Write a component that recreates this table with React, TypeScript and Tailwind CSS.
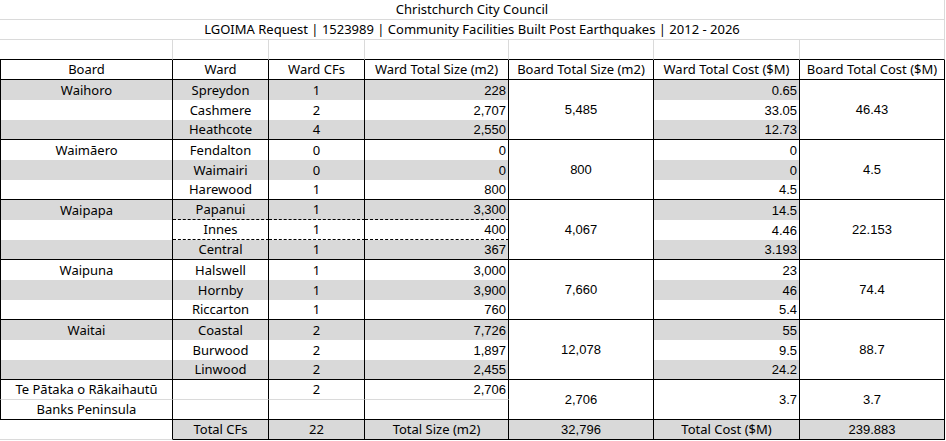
import { Fragment } from "react";

type WardRow = { ward: string; cfs: string; size: string; cost: string };
type Group = {
  board: string;
  boardSize: string;
  boardCost: string;
  dashed?: boolean;
  rows: WardRow[];
};

const groups: Group[] = [
  {
    board: "Waihoro",
    boardSize: "5,485",
    boardCost: "46.43",
    rows: [
      { ward: "Spreydon", cfs: "1", size: "228", cost: "0.65" },
      { ward: "Cashmere", cfs: "2", size: "2,707", cost: "33.05" },
      { ward: "Heathcote", cfs: "4", size: "2,550", cost: "12.73" },
    ],
  },
  {
    board: "Waimāero",
    boardSize: "800",
    boardCost: "4.5",
    rows: [
      { ward: "Fendalton", cfs: "0", size: "0", cost: "0" },
      { ward: "Waimairi", cfs: "0", size: "0", cost: "0" },
      { ward: "Harewood", cfs: "1", size: "800", cost: "4.5" },
    ],
  },
  {
    board: "Waipapa",
    boardSize: "4,067",
    boardCost: "22.153",
    dashed: true,
    rows: [
      { ward: "Papanui", cfs: "1", size: "3,300", cost: "14.5" },
      { ward: "Innes", cfs: "1", size: "400", cost: "4.46" },
      { ward: "Central", cfs: "1", size: "367", cost: "3.193" },
    ],
  },
  {
    board: "Waipuna",
    boardSize: "7,660",
    boardCost: "74.4",
    rows: [
      { ward: "Halswell", cfs: "1", size: "3,000", cost: "23" },
      { ward: "Hornby", cfs: "1", size: "3,900", cost: "46" },
      { ward: "Riccarton", cfs: "1", size: "760", cost: "5.4" },
    ],
  },
  {
    board: "Waitai",
    boardSize: "12,078",
    boardCost: "88.7",
    rows: [
      { ward: "Coastal", cfs: "2", size: "7,726", cost: "55" },
      { ward: "Burwood", cfs: "2", size: "1,897", cost: "9.5" },
      { ward: "Linwood", cfs: "2", size: "2,455", cost: "24.2" },
    ],
  },
];

const headers = [
  "Board",
  "Ward",
  "Ward CFs",
  "Ward Total Size (m2)",
  "Board Total Size (m2)",
  "Ward Total Cost ($M)",
  "Board Total Cost ($M)",
];

// Aptos-ish for labels, Arial metrics for the numeric cells
const txt = "font-['Noto_Sans',sans-serif] text-[13px]";
const num = "font-['Liberation_Sans',Arial,sans-serif] text-[13px]";

function Cell({ children, className = "" }: { children?: React.ReactNode; className?: string }) {
  return (
    <div className={`flex items-center pt-px overflow-hidden whitespace-nowrap text-black ${className}`}>
      {children}
    </div>
  );
}

export default function App() {
  let idx = 0;

  return (
    <div className="w-[946px] h-[441px] bg-white overflow-hidden">
      <div className="grid grid-cols-[173px_96px_96px_144px_145px_146px_145px] auto-rows-[20px]">
        {/* Title rows */}
        <Cell className={`col-span-7 justify-center border-b border-r border-[#dadada] ${txt}`}>
          Christchurch City Council
        </Cell>
        <Cell className={`col-span-7 justify-center border-b border-r border-[#dadada] ${txt}`}>
          LGOIMA Request | 1523989 | Community Facilities Built Post Earthquakes | 2012 - 2026
        </Cell>

        {/* Spacer row */}
        {headers.map((h) => (
          <Cell key={"sp-" + h} className="border-r border-r-[#dadada] border-b border-b-black" />
        ))}

        {/* Header row */}
        {headers.map((h, i) => (
          <Cell
            key={h}
            className={`justify-center border-r border-b border-black ${i === 0 ? "border-l" : ""} ${txt}`}
          >
            {h}
          </Cell>
        ))}

        {/* Board groups */}
        {groups.map((g) =>
          g.rows.map((r, ri) => {
            const gray = idx++ % 2 === 0;
            const fill = gray ? "bg-[#d9d9d9]" : "bg-white";
            const last = ri === g.rows.length - 1;
            const bb = last ? "border-b border-b-black" : "";
            const mid = last
              ? "border-b border-b-black"
              : g.dashed
                ? "border-b border-b-black [border-bottom-style:dashed]"
                : "";
            return (
              <Fragment key={r.ward}>
                <Cell className={`justify-center border-l border-r border-black ${fill} ${bb} ${txt}`}>
                  {ri === 0 ? g.board : ""}
                </Cell>
                <Cell className={`justify-center border-r border-r-black ${fill} ${mid} ${txt}`}>
                  {r.ward}
                </Cell>
                <Cell className={`justify-center border-r border-r-black ${fill} ${mid} ${txt}`}>
                  {r.cfs}
                </Cell>
                <Cell className={`justify-end pr-[2px] border-r border-r-black ${fill} ${mid} ${num}`}>
                  {r.size}
                </Cell>
                {ri === 0 && (
                  <Cell className={`row-span-3 justify-center border-r border-b border-black bg-white ${num}`}>
                    {g.boardSize}
                  </Cell>
                )}
                <Cell className={`justify-end pr-[2px] border-r border-r-black ${fill} ${bb} ${num}`}>
                  {r.cost}
                </Cell>
                {ri === 0 && (
                  <Cell className={`row-span-3 justify-center border-r border-b border-black bg-white ${num}`}>
                    {g.boardCost}
                  </Cell>
                )}
              </Fragment>
            );
          })
        )}

        {/* Te Pātaka o Rākaihautū / Banks Peninsula */}
        <Cell className={`justify-center border-l border-r border-l-black border-r-black border-b border-b-[#dadada] ${txt}`}>
          Te Pātaka o Rākaihautū
        </Cell>
        <Cell className="border-r border-r-black border-b border-b-[#dadada]" />
        <Cell className={`justify-center border-r border-r-black border-b border-b-[#dadada] ${txt}`}>2</Cell>
        <Cell className={`justify-end pr-[2px] border-r border-r-black border-b border-b-[#dadada] ${num}`}>
          2,706
        </Cell>
        <Cell className={`row-span-2 justify-center border-r border-b border-black ${num}`}>2,706</Cell>
        <Cell className={`row-span-2 justify-end pr-[2px] border-r border-b border-black ${num}`}>3.7</Cell>
        <Cell className={`row-span-2 justify-center border-r border-b border-black ${num}`}>3.7</Cell>
        <Cell className={`justify-center border-l border-r border-b border-black ${txt}`}>Banks Peninsula</Cell>
        <Cell className="border-r border-b border-black" />
        <Cell className="border-r border-b border-black" />
        <Cell className="border-r border-b border-black" />

        {/* Totals */}
        <Cell className="border-r border-r-black border-b border-b-[#dadada]" />
        <Cell className={`justify-center bg-[#d9d9d9] border-r border-b border-black ${txt}`}>Total CFs</Cell>
        <Cell className={`justify-center bg-[#d9d9d9] border-r border-b border-black ${txt}`}>22</Cell>
        <Cell className={`justify-center bg-[#d9d9d9] border-r border-b border-black ${txt}`}>Total Size (m2)</Cell>
        <Cell className={`justify-center bg-[#d9d9d9] border-r border-b border-black ${num}`}>32,796</Cell>
        <Cell className={`justify-center bg-[#d9d9d9] border-r border-b border-black ${txt}`}>Total Cost ($M)</Cell>
        <Cell className={`justify-center bg-[#d9d9d9] border-r border-b border-black ${num}`}>239.883</Cell>
      </div>
    </div>
  );
}
